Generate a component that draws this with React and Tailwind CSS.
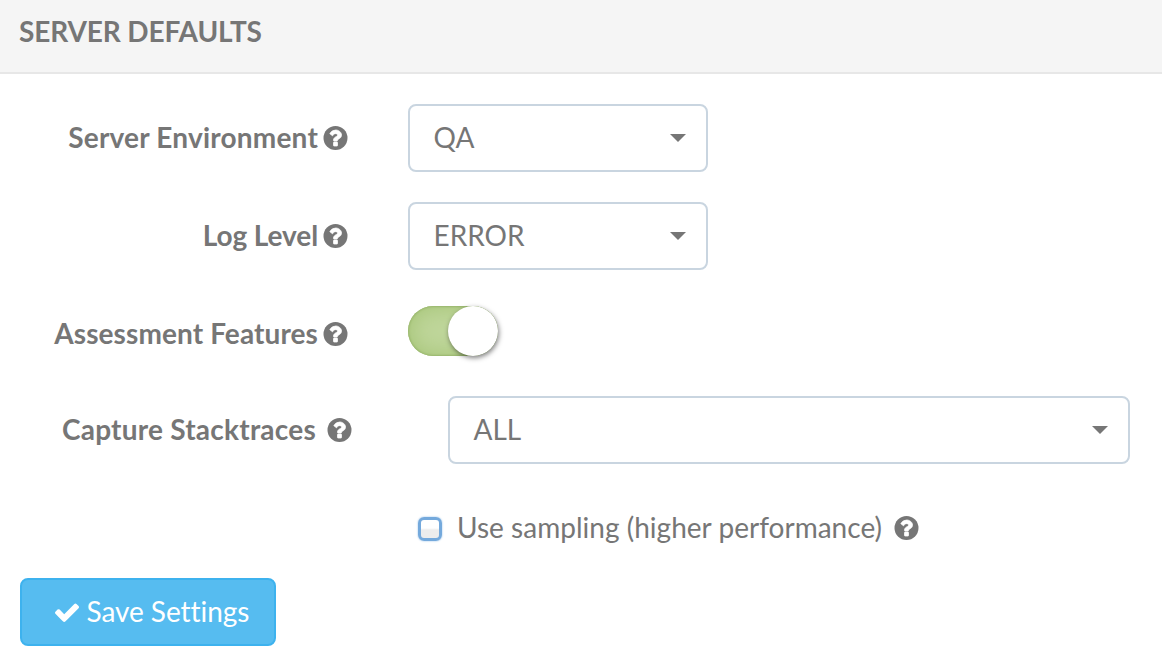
import React from "react";

function HelpIcon() {
  return (
    <svg viewBox="96 128 1600 1536" className="h-6 w-[25px] shrink-0" aria-hidden="true">
      <circle cx="896" cy="896" r="768" fill="currentColor" />
      <path
        fill="white"
        stroke="white"
        strokeWidth="48"
        d="M1024 1376v-192q0-14-9-23t-23-9h-192q-14 0-23 9t-9 23v192q0 14 9 23t23 9h192q14 0 23-9t9-23zM1280 704q0-88-55.500-163t-138.500-116-170-41q-243 0-371 213-15 24 8 42l132 100q7 6 19 6 16 0 25-12 53-68 86-92 34-24 86-24 48 0 85.500 26t37.500 59q0 38-20 61t-68 45q-63 28-115.500 86.500t-52.500 125.500v36q0 14 9 23t23 9h192q14 0 23-9t9-23q0-19 21.500-49.500t54.500-49.500q32-18 49-28.500t46-35 44.500-48 28-60.500 12.500-81z"
      />
    </svg>
  );
}

function CheckIcon() {
  return (
    <svg viewBox="121 302 1550 1220" className="w-6 h-[19px] shrink-0" fill="currentColor" aria-hidden="true">
      <path d="M1671 566q0 40-28 68l-724 724-136 136q-28 28-68 28t-68-28l-136-136-362-362q-28-28-28-68t28-68l136-136q28-28 68-28t68 28l294 295 656-657q28-28 68-28t68 28l136 136q28 28 28 68z" />
    </svg>
  );
}

function Label({ children, className = "w-[348px] gap-[5px]", textClass = "" }) {
  return (
    <div className={`flex shrink-0 items-center justify-end whitespace-nowrap font-bold ${className}`}>
      <span className={`pb-0.5 ${textClass}`}>{children}</span>
      <HelpIcon />
    </div>
  );
}

function Select({ value, className }) {
  return (
    <button
      type="button"
      className={`flex h-[68px] items-center justify-between rounded-lg border-2 border-[#c9d5e0] bg-white pl-[23.5px] pr-5 ${className}`}
    >
      <span className="pb-0.5">{value}</span>
      <svg viewBox="0 0 16 8" className="h-2 w-4" fill="currentColor" aria-hidden="true">
        <path d="M0 0h16L8 8z" />
      </svg>
    </button>
  );
}

export default function App() {
  return (
    <main className="h-[668px] w-[1162px] overflow-hidden bg-white font-['Lato',sans-serif] text-[28px] leading-10 text-[#767676] [font-variant-ligatures:none]">
      <header className="h-[74px] border-b-2 border-[#e7e7e7] bg-[#f5f5f5] pl-[19px] pt-[11px]">
        <h1 className="font-bold tracking-[-0.12px]">SERVER DEFAULTS</h1>
      </header>

      <div className="mt-[30px] flex h-[68px] items-center gap-[60px]">
        <Label textClass="tracking-[0.2px]">Server Environment</Label>
        <Select value="QA" className="w-[300px]" />
      </div>

      <div className="mt-[30px] flex h-[68px] items-center gap-[60px]">
        <Label textClass="tracking-[-0.1px]">Log Level</Label>
        <Select value="ERROR" className="w-[300px]" />
      </div>

      <div className="mt-[30px] flex h-[68px] items-center gap-[60px]">
        <Label textClass="tracking-[0.1px]">Assessment Features</Label>
        <button
          type="button"
          role="switch"
          aria-checked="true"
          aria-label="Assessment Features"
          className="mb-[6px] flex h-[50px] w-[90px] items-center justify-end rounded-full bg-[#bfd69b] shadow-[inset_0_0_24px_#a3c373,inset_0_0_2px_1px_#8faa68]"
        >
          <span className="size-[50px] rounded-full bg-white shadow-[1px_2px_5px_rgba(0,0,0,0.5)]" />
        </button>
      </div>

      <div className="mt-7 flex h-[68px] items-center gap-24">
        <Label className="w-[352px] gap-[11px]" textClass="tracking-[0.23px]">
          Capture Stacktraces
        </Label>
        <Select value="ALL" className="w-[682px]" />
      </div>

      <div className="mt-11 ml-[418px] flex h-10 items-center">
        <span
          role="checkbox"
          aria-checked="false"
          className="mt-0.5 size-6 rounded-md border-[3px] border-[#74a9dc] bg-linear-to-b from-white from-45% to-[#ededed] to-55% shadow-[0_0_2px_#8dbbe6]"
        />
        <span className="ml-[15px] pb-0.5 tracking-[0.02px]">Use sampling (higher performance)</span>
        <span className="ml-3">
          <HelpIcon />
        </span>
      </div>

      <button
        type="button"
        className="mt-[30px] ml-5 flex h-[68px] w-64 items-center gap-[7.5px] rounded-lg border-2 border-[#3db2ee] bg-[#56bcf0] pl-[33px] text-white"
      >
        <CheckIcon />
        <span className="pb-0.5 tracking-[-0.05px]">Save Settings</span>
      </button>
    </main>
  );
}
